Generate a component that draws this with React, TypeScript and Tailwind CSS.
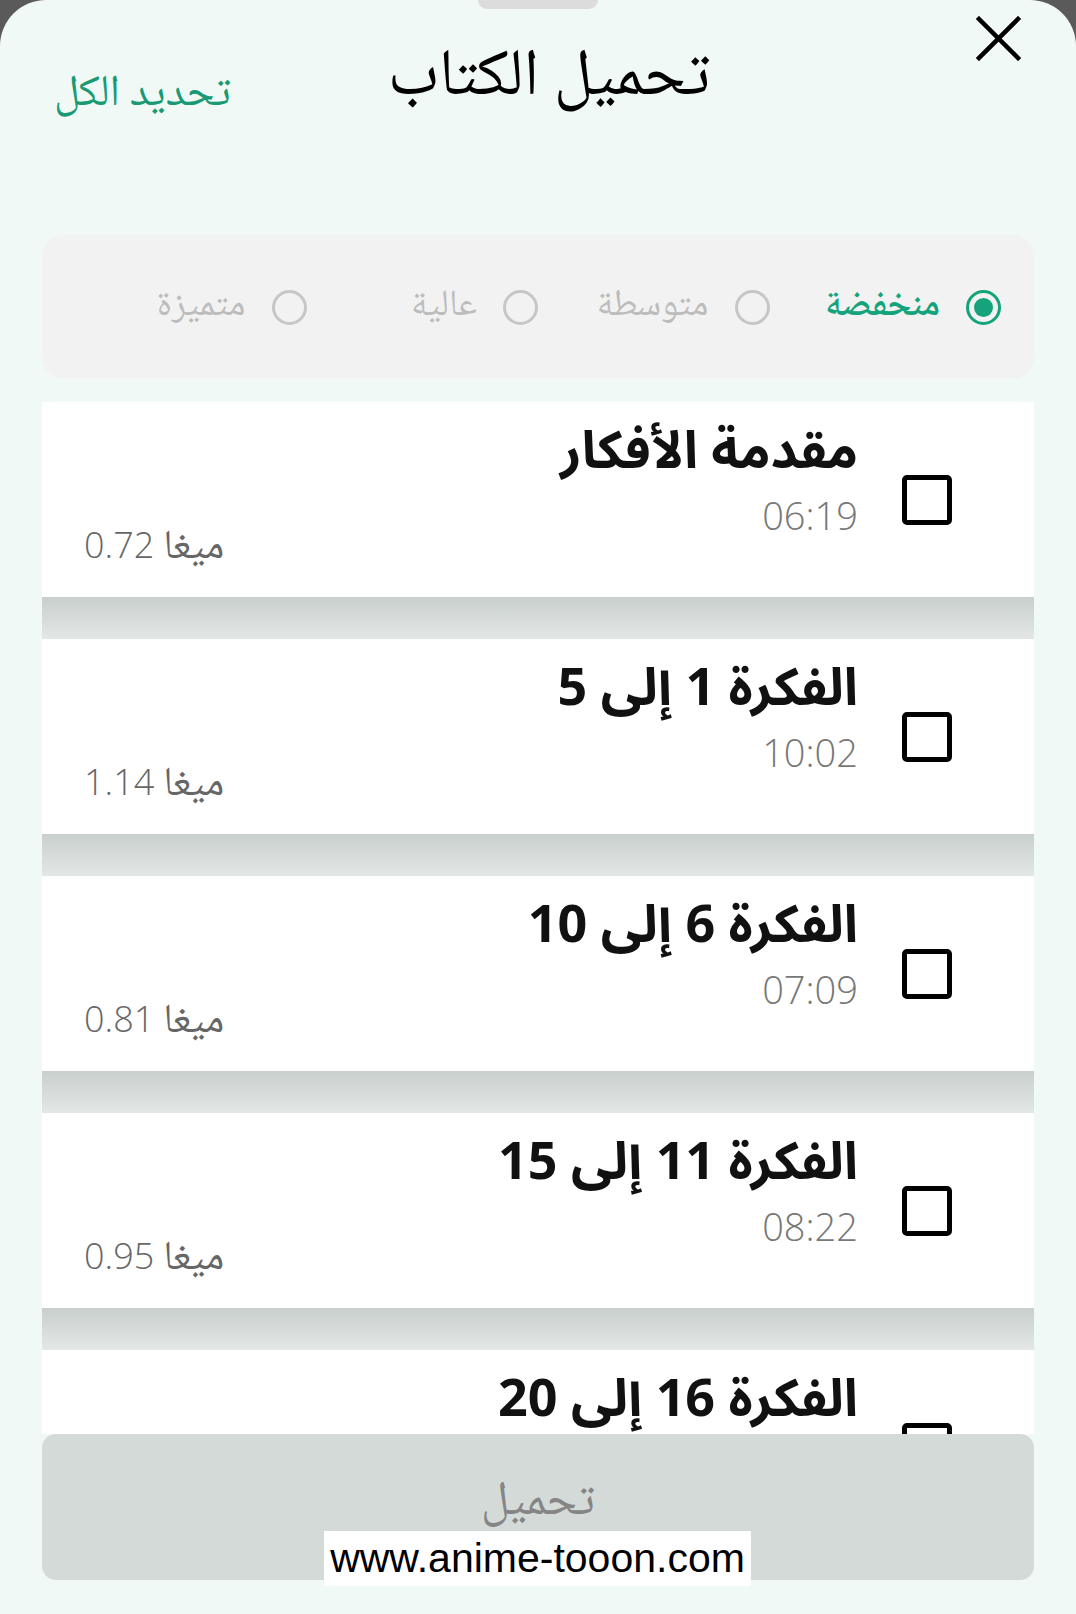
import { useState } from 'react'

const QUALITIES = [
  { id: 'low', label: 'منخفضة' },
  { id: 'medium', label: 'متوسطة' },
  { id: 'high', label: 'عالية' },
  { id: 'premium', label: 'متميزة' },
] as const

const PARTS = [
  { title: 'مقدمة الأفكار', time: '06:19', size: '0.72' },
  { title: 'الفكرة 1 إلى 5', time: '10:02', size: '1.14' },
  { title: 'الفكرة 6 إلى 10', time: '07:09', size: '0.81' },
  { title: 'الفكرة 11 إلى 15', time: '08:22', size: '0.95' },
  { title: 'الفكرة 16 إلى 20', time: '05:47', size: '0.77' },
]

const arabic = "font-['Noto_Naskh_Arabic','Noto_Sans_Arabic','DejaVu_Sans',sans-serif]"

export default function App() {
  const [quality, setQuality] = useState<string>('low')
  const [checked, setChecked] = useState<Record<number, boolean>>({})

  return (
    <div className="w-[1076px] h-[1614px] bg-[#5a5a5a] overflow-hidden">
      <div dir="rtl" className={`relative h-full bg-[#f1f9f6] rounded-t-[46px] flex flex-col ${arabic}`}>
        {/* header */}
        <div className="h-[235px] shrink-0">
          <div className="mx-auto w-[120px] h-[9px] rounded-b-full bg-[#dcdcdc]" />
          <div className="grid grid-cols-[1fr_auto_1fr] items-start">
            <div className="flex justify-start pr-[55px] pt-[7px]">
              <button type="button" className="w-[45px] h-[45px]">
                <svg viewBox="0 0 45 45" className="w-[45px] h-[45px]">
                  <path d="M3 3 L42 42 M42 3 L3 42" stroke="#000" strokeWidth="4.5" strokeLinecap="square" />
                </svg>
              </button>
            </div>
            <h1 className="pl-[22px] pt-[30px] text-[66px] leading-[82px] text-black font-normal">تحميل الكتاب</h1>
            <div className="flex justify-end pl-[54px] pt-[57px]">
              <button type="button" className="text-[44px] leading-[60px] text-[#1a9a74]">تحديد الكل</button>
            </div>
          </div>
        </div>

        {/* quality selector */}
        <div className="mx-[42px] h-[144px] shrink-0 rounded-[22px] bg-[#f2f2f2] grid grid-cols-4 items-center px-[33px]">
          {QUALITIES.map((q) => {
            const on = quality === q.id
            return (
              <button key={q.id} type="button" onClick={() => setQuality(q.id)} className="flex items-center gap-[26px]">
                <span
                  className={`w-[35px] h-[35px] shrink-0 rounded-full flex items-center justify-center border-[3.5px] ${
                    on ? 'border-[#14a37a]' : 'border-[#c6c6c6]'
                  }`}
                >
                  {on && <span className="w-[19px] h-[19px] rounded-full bg-[#14a37a]" />}
                </span>
                <span className={`text-[37px] leading-[48px] ${on ? 'text-[#14a37a] font-semibold' : 'text-[#bcbcbc]'}`}>{q.label}</span>
              </button>
            )
          })}
        </div>

        {/* parts list */}
        <div className="mt-[23px] mx-[42px] flex-1 overflow-hidden">
          {PARTS.map((p, i) => (
            <div key={i}>
              <div className="h-[195px] bg-white flex items-center pr-[82px] pl-[42px] gap-[44px]">
                <button
                  type="button"
                  onClick={() => setChecked((c) => ({ ...c, [i]: !c[i] }))}
                  className="w-[50px] h-[50px] shrink-0 border-[5px] border-black rounded-[5px] flex items-center justify-center"
                >
                  {checked[i] && <span className="w-[24px] h-[24px] bg-black" />}
                </button>
                <div className="self-start pt-[11px] flex flex-col items-start">
                  <div className="text-[52px] leading-[70px] font-bold text-[#111] font-['Open_Sans','Noto_Sans_Arabic','DejaVu_Sans',sans-serif]">
                    {p.title}
                  </div>
                  <div className="mt-[9px] text-[38px] leading-[46px] text-[#777] font-['Open_Sans',sans-serif] font-light">{p.time}</div>
                </div>
                <div className="flex-1 self-stretch flex items-end justify-end pb-[22px]">
                  <span className="text-[41px] leading-[52px] text-[#666]">
                    ميغا <span className="text-[36px] font-['Open_Sans',sans-serif] font-light">{p.size}</span>
                  </span>
                </div>
              </div>
              <div className="h-[42px] bg-gradient-to-b from-[#c9cfcd] to-[#e3e8e6]" />
            </div>
          ))}
        </div>

        {/* download button */}
        <div className="mx-[42px] mb-[34px] h-[146px] shrink-0 rounded-[14px] bg-[#d4dad8] flex items-center justify-center">
          <span className="text-[48px] leading-[60px] text-[#858585] -mt-[6px]">تحميل</span>
        </div>

        {/* watermark */}
        <div
          dir="ltr"
          className="absolute left-[324px] top-[1531px] w-[427px] h-[55px] bg-white flex items-center justify-center font-['Liberation_Sans',sans-serif] text-[41px] text-black"
        >
          www.anime-tooon.com
        </div>
      </div>
    </div>
  )
}
